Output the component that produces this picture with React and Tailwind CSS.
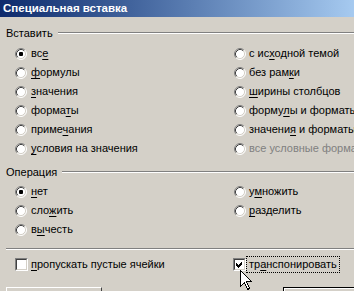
import React from "react";

const leftItems = [
    { text: "все", u: 2, checked: true },
    { text: "формулы", u: 0 },
    { text: "значения", u: 0 },
    { text: "форматы", u: 5 },
    { text: "примечания", u: 5 },
    { text: "условия на значения", u: 0 },
];

const rightItems = [
    { text: "с исходной темой", u: 4 },
    { text: "без рамки", u: 7 },
    { text: "ширины столбцов", u: 0 },
    { text: "формулы и форматы", u: 5 },
    { text: "значения и форматы", u: 7 },
    { text: "все условные форматы", u: -1, disabled: true },
];

const opsLeft = [
    { text: "нет", u: 0, checked: true },
    { text: "сложить", u: 3 },
    { text: "вычесть", u: 1 },
];

const opsRight = [
    { text: "умножить", u: 1 },
    { text: "разделить", u: 0 },
];

function Label({ text, u }) {
    if (u < 0) return <span>{text}</span>;
    return (
        <span>
            {text.slice(0, u)}
            <span className="underline underline-offset-[2px]">{text[u]}</span>
            {text.slice(u + 1)}
        </span>
    );
}

function Radio({ checked }) {
    return (
        <svg width="12" height="12" viewBox="0 0 12 12" className="shrink-0">
            <circle cx="6" cy="6" r="5" fill="#ffffff" />
            <path d="M2.11 9.89 A5.5 5.5 0 0 1 9.89 2.11" stroke="#808080" fill="none" />
            <path d="M9.89 2.11 A5.5 5.5 0 0 1 2.11 9.89" stroke="#ffffff" fill="none" />
            <path d="M2.82 9.18 A4.5 4.5 0 0 1 9.18 2.82" stroke="#404040" fill="none" />
            <path d="M9.18 2.82 A4.5 4.5 0 0 1 2.82 9.18" stroke="#d4d0c8" fill="none" />
            {checked && <rect x="4" y="4" width="4" height="4" rx="1" fill="#000000" />}
        </svg>
    );
}

function Checkbox({ checked }) {
    return (
        <span className="shrink-0 w-[13px] h-[13px] border border-t-[#808080] border-l-[#808080] border-b-white border-r-white">
            <span className="block w-[11px] h-[11px] bg-white border border-t-[#404040] border-l-[#404040] border-b-[#d4d0c8] border-r-[#d4d0c8] relative">
                {checked && (
                    <svg width="9" height="9" viewBox="0 0 9 9" className="absolute left-0 top-0" shapeRendering="crispEdges">
                        <polygon points="1,3 3,5 7,1 7,4 3,8 1,6" fill="#000000" />
                    </svg>
                )}
            </span>
        </span>
    );
}

function RadioRow({ item, gap }) {
    return (
        <div className={`h-[19px] flex items-center ${gap} whitespace-nowrap ${item.disabled ? "text-[#808080]" : "text-black"}`}>
            <Radio checked={item.checked} />
            <Label text={item.text} u={item.u} />
        </div>
    );
}

function GroupLabel({ children }) {
    return (
        <div className="h-[14px] flex items-center pl-[6px] gap-[5px]">
            <span className="text-black">{children}</span>
            <div className="flex-1 h-[2px] border-t border-[#808080] border-b border-b-white" />
        </div>
    );
}

function Etched() {
    return <div className="ml-[6px] h-[2px] border-t border-[#808080] border-b border-b-white" />;
}

export default function App() {
    return (
        <div
            className="relative w-[354px] h-[291px] overflow-hidden bg-[#d4d0c8] text-[11px] leading-none"
            style={{ fontFamily: '"Liberation Sans", "DejaVu Sans", sans-serif' }}
        >
            <div className="h-[17px] flex items-center pl-[3px] bg-gradient-to-r from-[#0e2a6c] to-[#a6caf0]">
                <span className="text-white font-bold text-[11.5px]">Специальная вставка</span>
            </div>

            <div className="pt-[9px]">
                <GroupLabel>Вставить</GroupLabel>
                <div className="mt-[4px] grid grid-cols-[234px_1fr]">
                    <div className="pl-[15px]">
                        {leftItems.map((item) => (
                            <RadioRow key={item.text} item={item} gap="gap-[4px]" />
                        ))}
                    </div>
                    <div className="overflow-hidden">
                        {rightItems.map((item) => (
                            <RadioRow key={item.text} item={item} gap="gap-[3px]" />
                        ))}
                    </div>
                </div>

                <div className="mt-[7px]">
                    <GroupLabel>Операция</GroupLabel>
                </div>
                <div className="mt-[3px] grid grid-cols-[234px_1fr]">
                    <div className="pl-[15px]">
                        {opsLeft.map((item) => (
                            <RadioRow key={item.text} item={item} gap="gap-[4px]" />
                        ))}
                    </div>
                    <div>
                        {opsRight.map((item) => (
                            <RadioRow key={item.text} item={item} gap="gap-[3px]" />
                        ))}
                    </div>
                </div>

                <div className="mt-[9px]">
                    <Etched />
                </div>

                <div className="mt-[5px] h-[19px] grid grid-cols-[233px_1fr] items-center">
                    <div className="pl-[15px] flex items-center gap-[3px] whitespace-nowrap">
                        <Checkbox />
                        <Label text="пропускать пустые ячейки" u={0} />
                    </div>
                    <div className="flex items-center whitespace-nowrap">
                        <Checkbox checked />
                        <span className="px-[2px] h-[17px] flex items-center border border-dotted border-black">
                            <Label text="транспонировать" u={2} />
                        </span>
                    </div>
                </div>

                <div className="mt-[13px] flex justify-between">
                    <div className="ml-[6px] w-[96px] h-[23px] border-t border-l border-white border-r border-r-[#404040]" />
                    <div className="w-[71px] h-[23px] border-t border-l border-black">
                        <div className="h-full border-t border-l border-white" />
                    </div>
                </div>
            </div>

            <svg width="13" height="21" viewBox="0 0 13 21" className="absolute left-[240px] top-[270px]" shapeRendering="crispEdges">
                <polygon
                    points="0.5,0.5 0.5,16.5 4.5,12.5 7.5,19.5 9.5,18.5 6.5,11.5 11.5,11.5"
                    fill="#ffffff"
                    stroke="#000000"
                    strokeWidth="1"
                />
            </svg>
        </div>
    );
}
